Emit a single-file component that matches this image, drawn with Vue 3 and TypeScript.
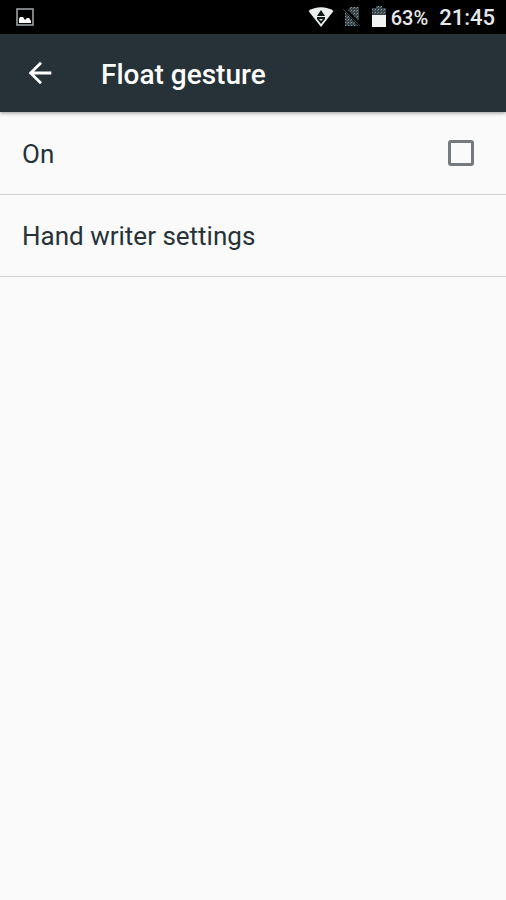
<script setup lang="ts">
import { ref } from 'vue'

const gestureEnabled = ref<boolean>(false)
const battery = '63%'
const time = '21:45'
</script>

<template>
  <div class="screen">
    <div class="status-bar">
      <svg class="photo-icon" viewBox="0 0 18 18" aria-hidden="true">
        <rect x="1" y="1" width="16" height="16" fill="none" stroke="#a4abae" stroke-width="1.5" />
        <path d="M3 15v-4l1-2h3l2 3 2-2h2l2 3v2z" fill="#fff" />
      </svg>
      <span class="spacer"></span>
      <svg class="wifi-icon" viewBox="0 0 26 22" aria-hidden="true">
        <path d="M.5 5C7.5 0 18.5 0 25.5 5L13 21z" fill="#eceeee" />
        <path d="M13 4l4 6H9zM9 11h8v2l-4 5-4-5z" fill="#111618" />
        <path d="M11 13h4l-2 2z" fill="#d5d9da" />
      </svg>
      <svg class="sim-icon" viewBox="0 0 20 20" aria-hidden="true">
        <defs>
          <pattern id="sim-dots" width="3" height="3" patternUnits="userSpaceOnUse">
            <rect width="3" height="3" fill="#364349" />
            <rect width="1" height="1" fill="#8b969b" />
            <rect x="2" y="1" width="1" height="1" fill="#65737a" />
          </pattern>
        </defs>
        <path d="M8 0h9v14L6 3zM3 5l13 14H3z" fill="url(#sim-dots)" />
        <path d="M2 2l17 17" stroke="#000" stroke-width="1.5" />
        <path d="M1 2l17 17" stroke="#364349" stroke-width="1" />
      </svg>
      <svg class="battery-icon" viewBox="0 0 14 21" aria-hidden="true">
        <defs>
          <pattern id="battery-dots" width="3" height="3" patternUnits="userSpaceOnUse">
            <rect width="3" height="3" fill="#364349" />
            <rect width="1" height="1" fill="#8b969b" />
            <rect x="2" y="1" width="1" height="1" fill="#65737a" />
          </pattern>
        </defs>
        <path d="M4 0h6v2h4v8H0V2h4z" fill="url(#battery-dots)" />
        <path d="M0 9h14v12H0z" fill="#f2f4f4" />
      </svg>
      <span class="battery">{{ battery }}</span>
      <span class="time">{{ time }}</span>
    </div>

    <header class="app-bar">
      <button class="back" type="button" aria-label="Back">
        <svg viewBox="0 0 24 24" aria-hidden="true">
          <path d="M20 11H7.83l5.59-5.59L12 4l-8 8 8 8 1.41-1.41L7.83 13H20z" fill="#fff" />
        </svg>
      </button>
      <h1>Float gesture</h1>
    </header>

    <main>
      <label class="row" for="gesture-enabled">
        <span>On</span>
        <input id="gesture-enabled" v-model="gestureEnabled" type="checkbox" />
      </label>
      <button class="row" type="button">Hand writer settings</button>
    </main>
  </div>
</template>

<style>
body {
  margin: 0;
  background: #fafafa;
}
</style>

<style scoped>
.screen {
  min-height: 100vh;
  background: #fafafa;
  color: #263238;
  font-family: Roboto, sans-serif;
}

.status-bar {
  display: flex;
  align-items: center;
  height: 34px;
  padding: 1px 11px 0 16px;
  box-sizing: border-box;
  background: #000;
  color: #e6e8e9;
}

.status-bar svg {
  margin-bottom: 2px;
}

.photo-icon {
  width: 18px;
  height: 18px;
}

.spacer {
  flex: 1;
}

.wifi-icon {
  width: 26px;
  height: 22px;
  margin-right: 8px;
}

.sim-icon {
  width: 20px;
  height: 20px;
  margin-right: 10px;
}

.battery-icon {
  width: 14px;
  height: 21px;
  margin-right: 5px;
}

.battery {
  margin-right: 11px;
  font-size: 20px;
  font-weight: 500;
}

.time {
  font-size: 22px;
  font-weight: 500;
}

.app-bar {
  position: relative;
  display: flex;
  align-items: center;
  height: 78px;
  padding: 4px 0 0 23px;
  box-sizing: border-box;
  background: #263238;
  color: #fff;
  box-shadow: 0 1px 4px rgba(0, 0, 0, 0.4);
}

.back {
  display: flex;
  width: 34px;
  height: 34px;
  margin: 0 44px 4px 0;
  padding: 0;
  border: 0;
  background: none;
}

.back svg {
  width: 34px;
  height: 34px;
}

h1 {
  margin: 0;
  font-size: 28px;
  font-weight: 500;
  line-height: 36px;
}

main {
  padding-top: 1px;
}

.row {
  display: flex;
  align-items: center;
  justify-content: space-between;
  width: 100%;
  height: 82px;
  padding: 0 32px 0 22px;
  box-sizing: border-box;
  border: 0;
  border-bottom: 1px solid #d3d3d3;
  background: none;
  color: inherit;
  font: 26px/32px Roboto, sans-serif;
  text-align: left;
}

.row input {
  appearance: none;
  width: 26px;
  height: 26px;
  margin: 0 0 2px;
  border: 3px solid #747a7d;
  border-radius: 3px;
}

.row input:checked {
  background: #263238;
}
</style>
